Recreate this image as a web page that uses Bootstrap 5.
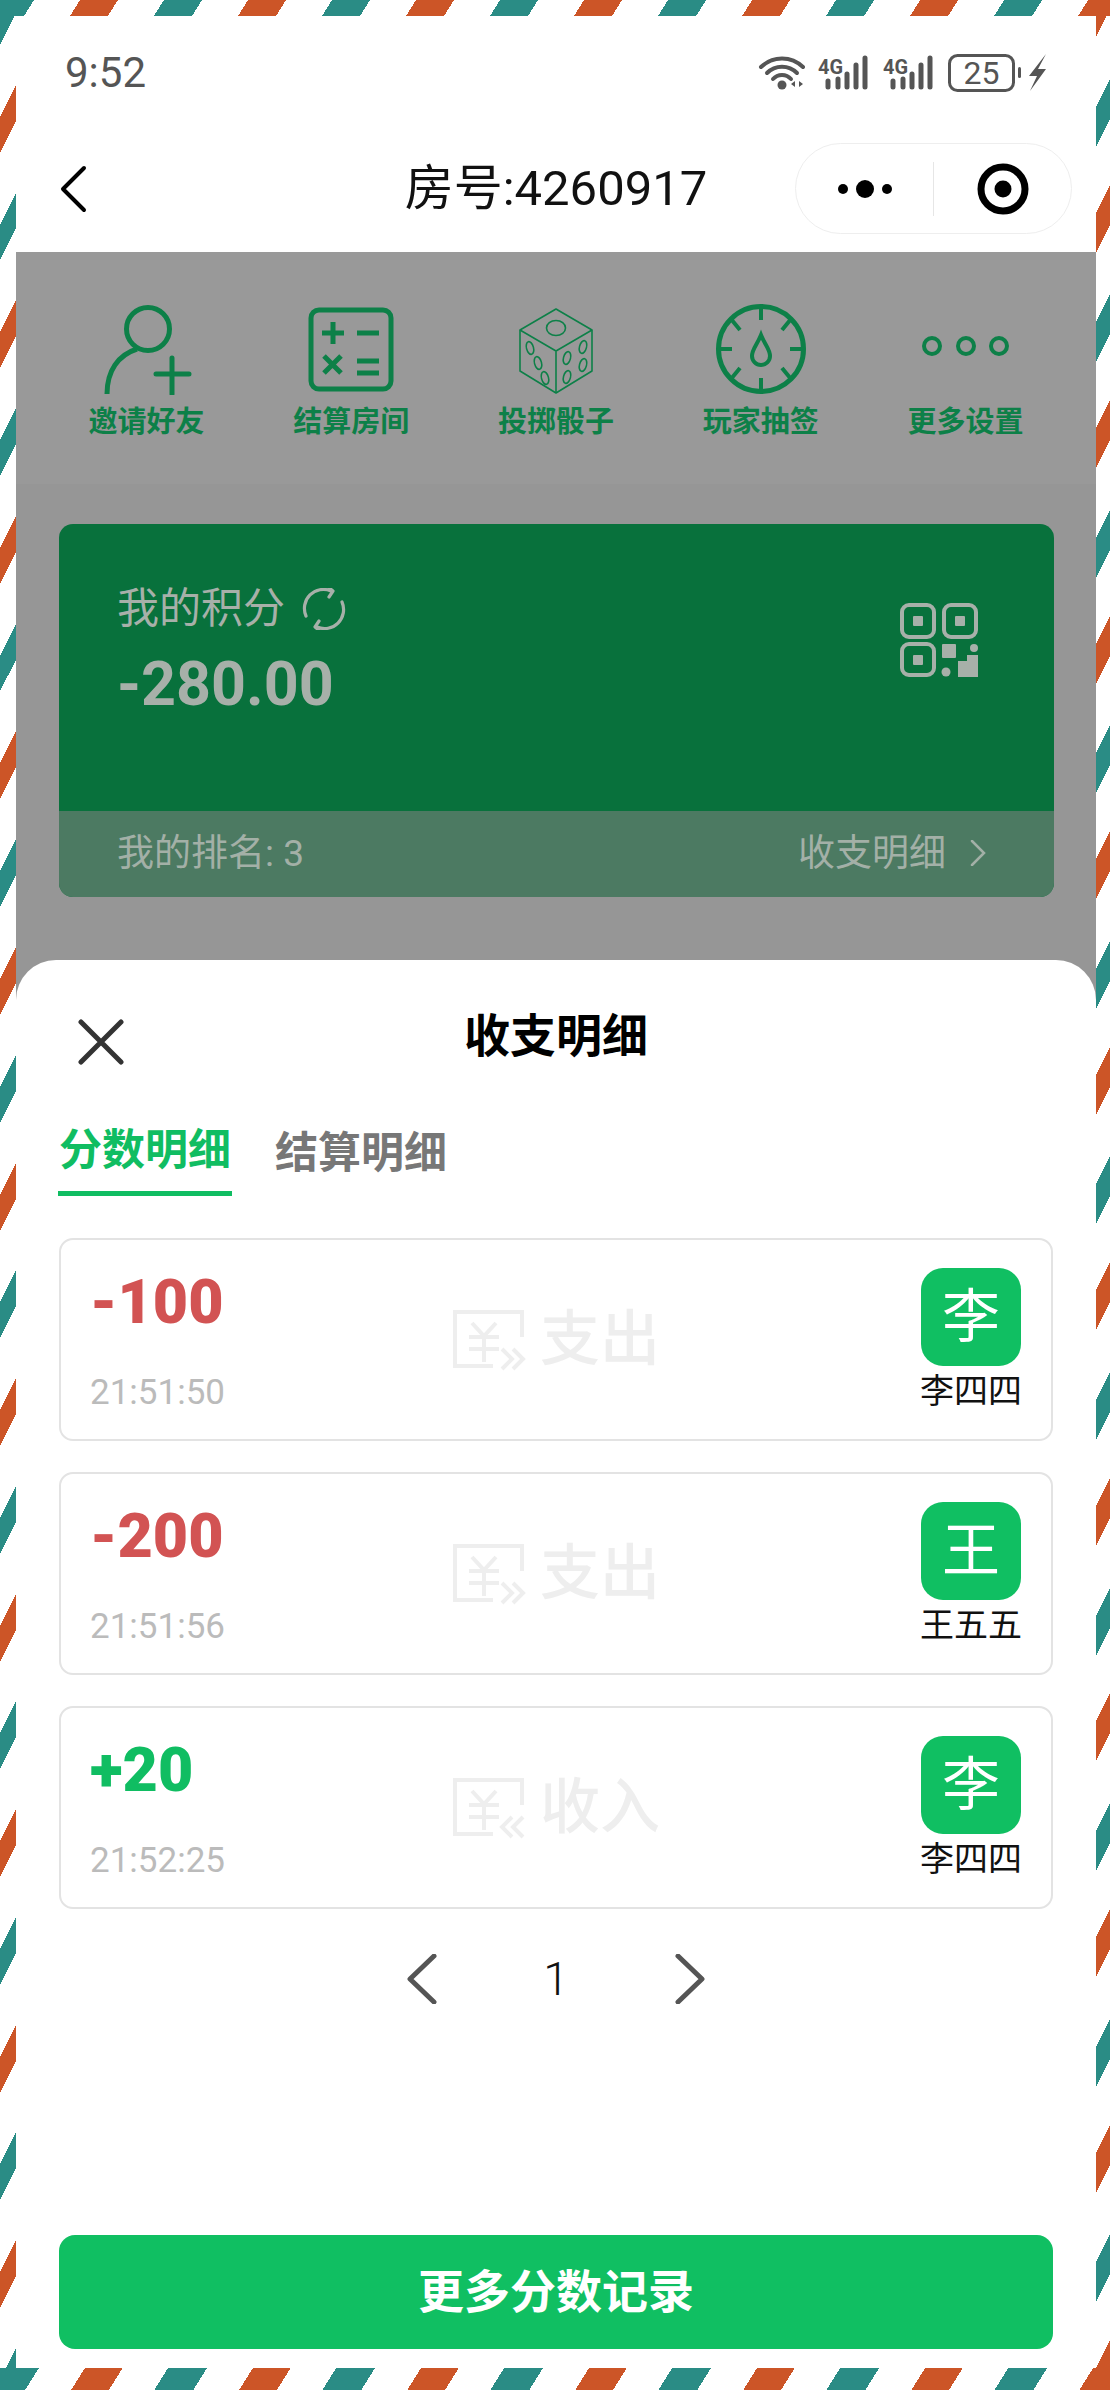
<!DOCTYPE html>
<html lang="zh-CN">
<head>
<meta charset="utf-8">
<title>收支明细</title>
<link rel="stylesheet" href="https://cdn.jsdelivr.net/npm/bootstrap@5.3.0/dist/css/bootstrap.min.css">
<style>
html,body{margin:0;background:#fff}
body{font-family:Roboto,"Noto Sans CJK SC",sans-serif;color:#111}
.frame{width:1110px;height:2390px;padding:16px 14px 22px 16px;overflow:hidden;
 background-repeat:no-repeat;
 background-image:
  repeating-linear-gradient(122deg,#2a8c85 0 28.8px,#fff 28.8px 67.8px,#cc5527 67.8px 100px,#fff 100px 139px,#2a8c85 139px 142.5px),
  repeating-linear-gradient(122deg,#2a8c85 0 33px,#fff 33px 72px,#cc5527 72px 104px,#fff 104px 142.5px),
  repeating-linear-gradient(116.57deg,#fff 0 4.1px,#2a8c85 4.1px 20.1px,#fff 20.1px 52.3px,#cc5527 52.3px 68.4px,#fff 68.4px 96.4px),
  repeating-linear-gradient(116.57deg,#cc5527 0 16.7px,#fff 16.7px 47.8px,#2a8c85 47.8px 65.7px,#fff 65.7px 95.2px,#cc5527 95.2px 96.4px);
 background-size:100% 16px,100% 22px,16px 100%,14px 100%;
 background-position:0 0,0 100%,0 0,100% 0}
.inner{height:100%;background:#969696}
.topwhite{background:#fff;height:236px}
.sbar{height:114px;padding:0 50px 0 49px}
.clock{font-size:42px;color:#555;line-height:1}
.navrow{height:122px;padding:0 24px 5px;display:grid;grid-template-columns:1fr auto 1fr;align-items:center}
.backlink{margin-left:20px}
.roomtitle{font-size:49px;line-height:1;color:#111}
.capsule{width:277px;height:91px;border:1px solid #eee;border-radius:46px;justify-self:end}
.capsule-part{flex:1 1 0}
.capsule-sep{width:1px;height:54px;background:#e6e6e6}
.toolbar{background:#999;height:232px;padding:51px 28px 0;display:grid;grid-template-columns:repeat(5,1fr)}
.tool-label{font-size:29px;font-weight:700;line-height:1;color:#0d8048;margin-top:13px}
.mainzone{height:476px;padding:40px 42px 0 43px}
.scorecard{background:#08713c;border-radius:14px;overflow:hidden;height:373px}
.score-top{height:287px;padding:60px 76px 0 58px;color:#a7b0a9}
.score-label{font-size:42px;line-height:50px}
.score-num{font-size:61px;font-weight:700;line-height:1;margin-top:20px}
.score-bottom{height:86px;background:#4c7a62;color:#a3b0a7;font-size:37px;line-height:1;padding:0 68px 2px 58px}
.qr-mark{margin-top:19px}
.sheet{height:1408px;background:#fff;border-radius:40px 40px 0 0;padding:0 43px}
.sheet-head{height:120px;position:relative}
.sheet-title{font-size:46px;font-weight:700;color:#000;line-height:1;padding-top:53px}
.closer{position:absolute;left:19px;top:59px}
.tabrow{height:116px;gap:43px}
.tabitem{font-size:43px;font-weight:700;line-height:1;color:#777;padding:52px 0 0;height:116px}
.tabitem-on{color:#10bd62;border-bottom:5px solid #10bd62;padding:49px 1px 0 1px;margin-left:-1px}
.tablist{margin-top:42px;gap:31px}
.paycard{height:203px;border:2px solid #e3e3e3;border-radius:14px;padding:0 29px 0 29px;position:relative}
.amt{font-size:61px;font-weight:900;line-height:1;padding-top:32px}
.amt-neg{color:#d25353}.amt-pos{color:#10bd62}
.paytime{font-size:35px;color:#bbb;line-height:1;margin-top:42px}
.avatar-box{background:#10bf62;color:#fff;width:100px;height:98px;border-radius:22px;font-size:58px;line-height:1;margin-top:28px}
.who{font-size:34px;line-height:1;color:#111;margin-top:8px;width:102px;text-align:center}
.ghost{position:absolute;left:50%;top:50%;transform:translate(-50%,-50%);color:#eeeeee;font-size:60px;font-weight:500;line-height:1;gap:14px;white-space:nowrap}
.pager{height:138px;padding-top:2px}
.pager-num{font-size:46px;font-weight:300;color:#111;line-height:1;width:238px;text-align:center}
.morebtn{height:114px;border-radius:16px;background:#10bf62;color:#fff;font-size:46px;font-weight:700;margin-top:188px;border:0;width:100%}
</style>
</head>
<body>
<div class="frame">
<div class="inner">
  <div class="topwhite">
    <div class="sbar d-flex align-items-center justify-content-between">
      <span class="clock">9:52</span>
      <svg width="288" height="40" viewBox="757 52 288 40" aria-hidden="true">
        <g fill="none" stroke="#555" stroke-width="4" stroke-linecap="round">
          <path d="M760 66a30 30 0 0 1 42 0"/><path d="M766 72a21 21 0 0 1 30 0"/><path d="M772 78a12 12 0 0 1 18 0"/>
        </g>
        <circle cx="781" cy="84" r="4.5" fill="#555"/>
        <path d="M794 80l-4 3 4 3zM798 80l4 3-4 3z" fill="#555"/>
        <g font-family="Roboto,sans-serif" font-weight="700" font-size="20" fill="#555">
          <text x="817" y="73" textLength="25" lengthAdjust="spacingAndGlyphs">4G</text>
          <text x="882" y="73" textLength="25" lengthAdjust="spacingAndGlyphs">4G</text>
        </g>
        <g stroke="#555" stroke-width="5" stroke-linecap="round">
          <path d="M827 80v6M837 78v8M846 73v13M855 64v22M864 57v29"/>
          <path d="M892 80v6M902 78v8M911 73v13M920 64v22M929 57v29"/>
        </g>
        <rect x="948.5" y="54.5" width="64" height="35" rx="8" fill="none" stroke="#555" stroke-width="3"/>
        <text x="980.5" y="83" text-anchor="middle" font-family="Roboto,sans-serif" font-size="32" fill="#555">25</text>
        <rect x="1017" y="66" width="3" height="11" rx="1.5" fill="#555"/>
        <path d="M1045 53l-17 22h8l-7 15 16-22h-8z" fill="#555"/>
      </svg>
    </div>
    <div class="navrow">
      <svg class="backlink" width="30" height="48" viewBox="0 0 30 48" aria-hidden="true"><path d="M24 3L3 24l21 21" fill="none" stroke="#000" stroke-width="4" stroke-linecap="round" stroke-linejoin="round"/></svg>
      <div class="roomtitle">房号:4260917</div>
      <div class="capsule d-flex align-items-center">
        <div class="capsule-part d-flex justify-content-center">
          <svg width="56" height="20" viewBox="0 0 56 20" aria-hidden="true"><circle cx="6" cy="10" r="5" fill="#000"/><circle cx="28" cy="10" r="9" fill="#000"/><circle cx="50" cy="10" r="5" fill="#000"/></svg>
        </div>
        <div class="capsule-sep"></div>
        <div class="capsule-part d-flex justify-content-center">
          <svg width="52" height="52" viewBox="0 0 52 52" aria-hidden="true"><circle cx="26" cy="26" r="22" fill="none" stroke="#000" stroke-width="7"/><circle cx="26" cy="26" r="8.5" fill="#000"/></svg>
        </div>
      </div>
    </div>
  </div>

  <div class="toolbar">
    <div class="d-flex flex-column align-items-center">
      <svg width="100" height="92" viewBox="-4 0 100 92" aria-hidden="true"><g fill="none" stroke="#0d8048" stroke-width="5" stroke-linecap="round"><circle cx="48" cy="26" r="21.5"/><path d="M37 46C18 52 7 68 7 91" stroke-linecap="butt"/><path d="M56 71h33M72 55v36"/></g></svg>
      <div class="tool-label">邀请好友</div>
    </div>
    <div class="d-flex flex-column align-items-center">
      <svg width="100" height="92" viewBox="0 0 100 92" aria-hidden="true"><rect x="10" y="7" width="80" height="79" rx="8" fill="none" stroke="#0d8048" stroke-width="5"/><g stroke="#0d8048" stroke-width="5" fill="none"><path d="M21 30h22M32 19v22M56 30h22M23 53l17 17M40 53L23 70M56 58h22M56 70h22"/></g></svg>
      <div class="tool-label">结算房间</div>
    </div>
    <div class="d-flex flex-column align-items-center">
      <svg width="100" height="92" viewBox="0 0 100 92" aria-hidden="true"><g fill="none" stroke="#0d8048" stroke-width="1.6" stroke-linejoin="round"><path d="M50 6L86 27v41L50 90 14 68V27z"/><path d="M14 27l36 21 36-21M50 48v42"/><ellipse cx="50" cy="25" rx="9.5" ry="7.5"/><ellipse cx="24" cy="45" rx="3.5" ry="6.5" transform="rotate(-15 24 45)"/><ellipse cx="32" cy="60" rx="3.5" ry="6.5" transform="rotate(-15 32 60)"/><ellipse cx="39" cy="75" rx="3.5" ry="6.5" transform="rotate(-15 39 75)"/><ellipse cx="77" cy="44" rx="3.5" ry="6.5" transform="rotate(15 77 44)"/><ellipse cx="77" cy="62" rx="3.5" ry="6.5" transform="rotate(15 77 62)"/><ellipse cx="61" cy="55" rx="3.5" ry="6.5" transform="rotate(15 61 55)"/><ellipse cx="61" cy="74" rx="3.5" ry="6.5" transform="rotate(15 61 74)"/></g></svg>
      <div class="tool-label">投掷骰子</div>
    </div>
    <div class="d-flex flex-column align-items-center">
      <svg width="100" height="92" viewBox="0 0 100 92" aria-hidden="true"><g fill="none" stroke="#0d8048" stroke-width="5"><circle cx="50" cy="46" r="42.5"/><path d="M50 4v13M50 75v13M8 46h13M79 46h13M20 16l9 11M80 16l-9 11M20 76l9-11M80 76l-9-11" stroke-width="4"/><path d="M50 32c-4 10-9 14-9 21a9 9 0 0 0 18 0c0-7-5-11-9-21z" stroke-width="4"/></g></svg>
      <div class="tool-label">玩家抽签</div>
    </div>
    <div class="d-flex flex-column align-items-center">
      <svg width="100" height="92" viewBox="0 0 100 92" aria-hidden="true"><g fill="none" stroke="#0d8048" stroke-width="4"><circle cx="16" cy="43" r="8"/><circle cx="50" cy="43" r="8"/><circle cx="83" cy="43" r="8"/></g></svg>
      <div class="tool-label">更多设置</div>
    </div>
  </div>

  <div class="mainzone">
    <div class="scorecard">
      <div class="score-top d-flex justify-content-between">
        <div>
          <div class="d-flex align-items-center gap-3">
            <span class="score-label">我的积分</span>
            <svg width="46" height="42" viewBox="0 0 46 42" fill="none" stroke="#a7b0a9" stroke-width="3.2" stroke-linecap="round" stroke-linejoin="round" aria-hidden="true"><path d="M5 28A19 19 0 0 1 30 3"/><path d="M41 14A19 19 0 0 1 16 39"/><path d="M27 -1l5 4-4 6M19 43l-5-4 4-6"/></svg>
          </div>
          <div class="score-num">-280.00</div>
        </div>
        <svg class="qr-mark" width="78" height="74" viewBox="0 0 78 74" aria-hidden="true"><g fill="none" stroke="#a7b0a9" stroke-width="4"><rect x="2" y="2" width="32" height="32" rx="7"/><rect x="44" y="2" width="32" height="32" rx="7"/><rect x="2" y="41" width="32" height="31" rx="7"/></g><g fill="#a7b0a9"><rect x="13" y="13" width="10" height="10" rx="1"/><rect x="55" y="13" width="10" height="10" rx="1"/><rect x="13" y="52" width="10" height="10" rx="1"/><rect x="42" y="41" width="14" height="14" rx="1"/><circle cx="74" cy="45" r="4"/><path d="M58 58h9v-6h11v22H58z"/><circle cx="46" cy="69" r="4.5"/></g></svg>
      </div>
      <div class="score-bottom d-flex justify-content-between align-items-center">
        <span>我的排名: 3</span>
        <span class="d-flex align-items-center gap-4">收支明细<svg width="16" height="26" viewBox="0 0 16 26" aria-hidden="true"><path d="M2 1l12 12L2 25" fill="none" stroke="#a3b0a7" stroke-width="2.5" stroke-linecap="round"/></svg></span>
      </div>
    </div>
  </div>

  <div class="sheet">
    <div class="sheet-head text-center">
      <svg class="closer" width="46" height="46" viewBox="0 0 46 46" aria-hidden="true"><path d="M3 3l40 40M43 3L3 43" stroke="#333" stroke-width="5" stroke-linecap="round"/></svg>
      <div class="sheet-title">收支明细</div>
    </div>
    <div class="d-flex tabrow">
      <div class="tabitem tabitem-on">分数明细</div>
      <div class="tabitem">结算明细</div>
    </div>
    <div class="d-flex flex-column tablist">

      <div class="paycard d-flex justify-content-between">
        <div>
          <div class="amt amt-neg">-100</div>
          <div class="paytime">21:51:50</div>
        </div>
        <div class="ghost d-flex align-items-center">
          <svg width="74" height="62" viewBox="0 0 74 62" fill="none" stroke="#eee" stroke-width="4" aria-hidden="true"><path d="M70 28V3H3v54h38"/><path d="M20 14l12 13 12-13M17 28h30M17 40h30M32 27v26"/><path d="M50 40l10 10-10 10M61 40l10 10-10 10"/></svg>
          <span>支出</span>
        </div>
        <div class="d-flex flex-column align-items-center">
          <div class="avatar-box d-flex align-items-center justify-content-center">李</div>
          <div class="who">李四四</div>
        </div>
      </div>

      <div class="paycard d-flex justify-content-between">
        <div>
          <div class="amt amt-neg">-200</div>
          <div class="paytime">21:51:56</div>
        </div>
        <div class="ghost d-flex align-items-center">
          <svg width="74" height="62" viewBox="0 0 74 62" fill="none" stroke="#eee" stroke-width="4" aria-hidden="true"><path d="M70 28V3H3v54h38"/><path d="M20 14l12 13 12-13M17 28h30M17 40h30M32 27v26"/><path d="M50 40l10 10-10 10M61 40l10 10-10 10"/></svg>
          <span>支出</span>
        </div>
        <div class="d-flex flex-column align-items-center">
          <div class="avatar-box d-flex align-items-center justify-content-center">王</div>
          <div class="who">王五五</div>
        </div>
      </div>

      <div class="paycard d-flex justify-content-between">
        <div>
          <div class="amt amt-pos">+20</div>
          <div class="paytime">21:52:25</div>
        </div>
        <div class="ghost d-flex align-items-center">
          <svg width="74" height="62" viewBox="0 0 74 62" fill="none" stroke="#eee" stroke-width="4" aria-hidden="true"><path d="M70 28V3H3v54h38"/><path d="M20 14l12 13 12-13M17 28h30M17 40h30M32 27v26"/><path d="M60 40L50 50l10 10M71 40L61 50l10 10"/></svg>
          <span>收入</span>
        </div>
        <div class="d-flex flex-column align-items-center">
          <div class="avatar-box d-flex align-items-center justify-content-center">李</div>
          <div class="who">李四四</div>
        </div>
      </div>

    </div>
    <div class="pager d-flex align-items-center justify-content-center">
      <svg width="30" height="50" viewBox="0 0 30 50" aria-hidden="true"><path d="M27 2L3 25l24 23" fill="none" stroke="#555" stroke-width="5" stroke-linecap="round" stroke-linejoin="round"/></svg>
      <span class="pager-num">1</span>
      <svg width="30" height="50" viewBox="0 0 30 50" aria-hidden="true"><path d="M3 2l24 23L3 48" fill="none" stroke="#555" stroke-width="5" stroke-linecap="round" stroke-linejoin="round"/></svg>
    </div>
    <button class="btn morebtn" type="button">更多分数记录</button>
  </div>
</div>
</div>
<script src="https://cdn.jsdelivr.net/npm/bootstrap@5.3.0/dist/js/bootstrap.bundle.min.js"></script>
</body>
</html>
